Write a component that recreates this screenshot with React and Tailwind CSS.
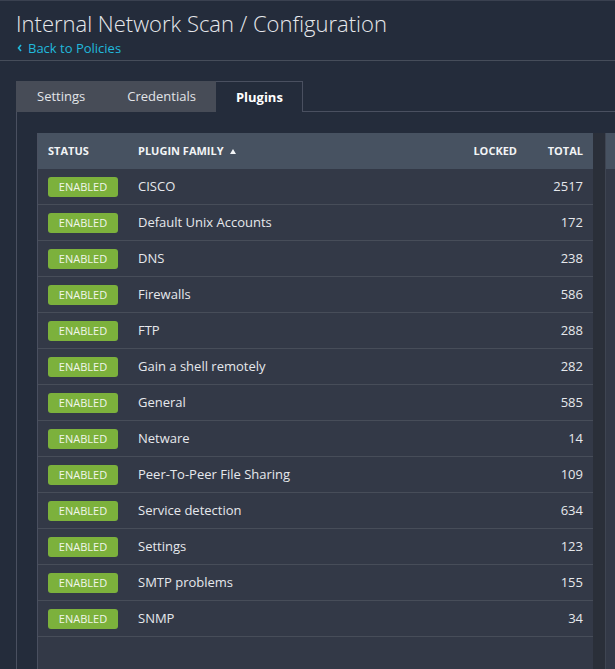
import React from "react";

const rows = [
  ["CISCO", "2517"],
  ["Default Unix Accounts", "172"],
  ["DNS", "238"],
  ["Firewalls", "586"],
  ["FTP", "288"],
  ["Gain a shell remotely", "282"],
  ["General", "585"],
  ["Netware", "14"],
  ["Peer-To-Peer File Sharing", "109"],
  ["Service detection", "634"],
  ["Settings", "123"],
  ["SMTP problems", "155"],
  ["SNMP", "34"],
];

export default function App() {
  return (
    <div className="min-h-screen h-[669px] overflow-hidden bg-[#242c3b] border-t border-[#3a4150] font-['Open_Sans',sans-serif] text-[#e4e6ea]">
      <div className="h-[60px] border-b border-[#464d5a] px-4">
        <h1 className="pt-[7px] text-[22px] leading-[30px] font-light text-[#e6e8ec]">
          Internal Network Scan / Configuration
        </h1>
        <div className="flex items-center gap-[6px] text-[13px] leading-[18px] text-[#21b9dc] pl-[1px] mt-[1px]">
          <svg width="5" height="8" viewBox="0 0 5 8" className="mt-[-1px]">
            <path d="M4 1 L1.5 4 L4 7" fill="none" stroke="#21b9dc" strokeWidth="1.6" />
          </svg>
          <span>Back to Policies</span>
        </div>
      </div>

      <div className="pl-4 pt-[20px]">
        <div className="flex h-[31px] text-[13px]">
          <div className="flex items-center bg-[#474c57] text-[#e2e4e8] pt-[1px]">
            <div className="px-[21px]">Settings</div>
            <div className="pl-[21px] pr-[20px]">Credentials</div>
          </div>
          <div className="flex items-center pl-[20px] pr-[19px] pt-[1px] border-t border-r border-[#4a5060] font-bold text-white">
            Plugins
          </div>
          <div className="flex-1 border-b border-[#4a5060]" />
        </div>

        <div className="border-l border-[#4a5060] pl-[20px] pt-[21px]">
          <div className="flex h-[600px]">
            <div className="w-[556px] shrink-0 bg-[#333947] border-l border-[#4a5060]">
              <div className="grid grid-cols-[100px_309px_80px_66px] h-[36px] items-center bg-[#475261] text-[11px] font-bold text-[#f2f4f6]">
                <div className="pl-[10px]">STATUS</div>
                <div className="flex items-center gap-[6px]">
                  <span>PLUGIN FAMILY</span>
                  <svg width="6" height="5" viewBox="0 0 6 5">
                    <path d="M3 0 L6 5 L0 5 Z" fill="#f2f4f6" />
                  </svg>
                </div>
                <div className="text-right pr-[10px]">LOCKED</div>
                <div className="text-right pr-[10px]">TOTAL</div>
              </div>
              {rows.map(([name, total]) => (
                <div
                  key={name}
                  className="grid grid-cols-[100px_309px_80px_66px] h-[36px] items-center border-b border-[#474d59] text-[13px] pt-[1px]"
                >
                  <div className="pl-[10px]">
                    <div className="w-[70px] h-[20px] rounded-[3px] bg-[#7cb13c] flex items-center justify-center text-[11px] text-[#f1f5ea]">
                      ENABLED
                    </div>
                  </div>
                  <div className="text-[#e6e8ec]">{name}</div>
                  <div />
                  <div className="text-right pr-[10px] text-[#e6e8ec]">{total}</div>
                </div>
              ))}
            </div>
            <div className="w-[13px] shrink-0 bg-[#2a2f39] border-r border-[#3f4552]" />
            <div className="flex-1 flex flex-col">
              <div className="h-[36px] bg-[#475261]" />
              <div className="flex-1 bg-[#333947]" />
            </div>
          </div>
        </div>
      </div>
    </div>
  );
}
